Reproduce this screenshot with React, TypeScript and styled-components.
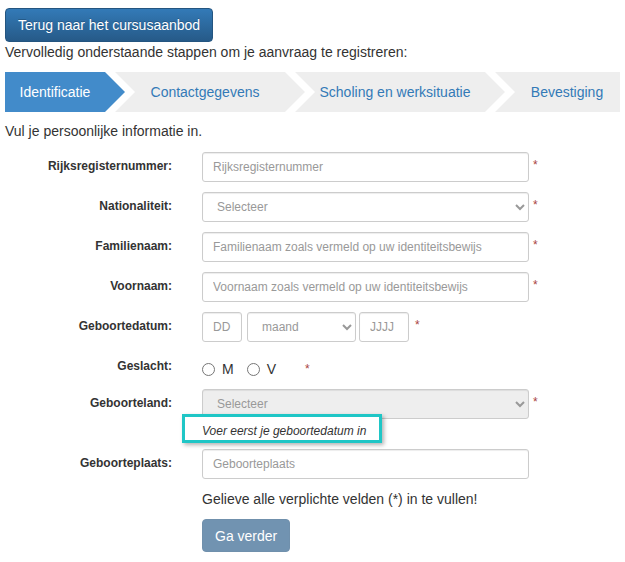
import styled, { createGlobalStyle, css } from "styled-components";

const GlobalStyle = createGlobalStyle`
  body {
    margin: 0;
    background: #fff;
    font-family: "Liberation Sans", Arial, Helvetica, sans-serif;
    font-size: 14px;
    line-height: 20px;
    color: #333;
  }
  * { box-sizing: border-box; }
`;

const Page = styled.div`
  padding: 8px 5px;
`;

const BackButton = styled.button`
  display: block;
  height: 34px;
  padding: 6px 12px;
  font: inherit;
  color: #fff;
  background-image: linear-gradient(to bottom, #337ab7 0, #265a88 100%);
  border: 1px solid #245580;
  border-radius: 4px;
  text-shadow: 0 -1px 0 rgba(0, 0, 0, 0.2);
  cursor: pointer;
`;

const Intro = styled.p`
  margin: 0;
`;

const StepBar = styled.ol`
  display: flex;
  margin: 10px 0 0;
  padding: 0;
  list-style: none;
  overflow: hidden;
`;

const Step = styled.li<{ $width: number; $active?: boolean; $first?: boolean }>`
  flex: 0 0 ${(p) => p.$width}px;
  height: 40px;
  line-height: 40px;
  text-align: center;
  white-space: nowrap;
  padding: 0 20px 0 ${(p) => (p.$first ? 0 : 10)}px;
  margin-left: ${(p) => (p.$first ? 0 : -10)}px;
  background: ${(p) => (p.$active ? "#428bca" : "#eee")};
  color: ${(p) => (p.$active ? "#fff" : "#337ab7")};
  clip-path: ${(p) =>
    p.$first
      ? "polygon(0 0, calc(100% - 20px) 0, 100% 50%, calc(100% - 20px) 100%, 0 100%)"
      : "polygon(0 0, calc(100% - 20px) 0, 100% 50%, calc(100% - 20px) 100%, 0 100%, 20px 50%)"};
`;

const Lead = styled.p`
  margin: 9px 0 11px;
`;

const Form = styled.form`
  display: flex;
  flex-direction: column;
  gap: 10px;
`;

const Row = styled.div<{ $height?: number }>`
  display: flex;
  align-items: flex-start;
  min-height: ${(p) => p.$height ?? 30}px;
`;

const Label = styled.label<{ $offset?: number }>`
  flex: 0 0 167px;
  margin-right: 30px;
  text-align: right;
  font-weight: bold;
  font-size: 12px;
  line-height: 17px;
  padding-top: ${(p) => p.$offset ?? 6}px;
`;

const Field = styled.div`
  display: flex;
  align-items: flex-start;
`;

const Column = styled.div`
  display: flex;
  flex-direction: column;
  align-items: flex-start;
`;

const controlBase = css`
  height: 30px;
  padding: 5px 10px;
  font-family: inherit;
  font-size: 12px;
  line-height: 1.5;
  color: #555;
  background-color: #fff;
  border: 1px solid #ccc;
  border-radius: 3px;
  box-shadow: inset 0 1px 1px rgba(0, 0, 0, 0.075);
  &::placeholder { color: #999; }
`;

const TextInput = styled.input<{ $width: number }>`
  ${controlBase};
  width: ${(p) => p.$width}px;
`;

const Select = styled.select<{ $width: number }>`
  ${controlBase};
  width: ${(p) => p.$width}px;
  color: #999;
  &:disabled {
    background-color: #eee;
    opacity: 1;
    cursor: not-allowed;
  }
`;

const Required = styled.span<{ $gap?: number }>`
  margin-left: ${(p) => p.$gap ?? 4}px;
  color: #a94442;
  font-size: 12px;
  line-height: 27px;
`;

const DateGroup = styled.div`
  display: flex;
  gap: 5px;
  & > :last-child { margin-left: -2px; }
`;

const RadioGroup = styled.div`
  display: flex;
  align-items: center;
  height: 27px;
  padding-top: 7px;
`;

const RadioLabel = styled.label`
  display: flex;
  align-items: center;
  gap: 7px;
  margin-right: 13px;
  font-size: 14px;
  line-height: 20px;
`;

const Radio = styled.input`
  width: 13px;
  height: 13px;
  margin: 0;
`;

const HelpWrap = styled.div`
  position: relative;
  margin-top: 4px;
`;

const Highlight = styled.span`
  position: absolute;
  left: -20px;
  top: -9px;
  width: 200px;
  height: 29px;
  background: #fff;
  border: 3px solid #1fc6c6;
  box-shadow: 2px 2px 4px rgba(0, 0, 0, 0.3);
  z-index: 1;
`;

const HelpText = styled.span`
  position: relative;
  z-index: 2;
  display: block;
  font-size: 12px;
  line-height: 16px;
  font-style: italic;
  color: #333;
`;

const Note = styled.p`
  margin: 0 0 0 197px;
`;

const NextButton = styled.button`
  align-self: flex-start;
  margin-left: 197px;
  height: 33px;
  padding: 6px 12px;
  font: inherit;
  color: #fff;
  background-color: #265a88;
  border: 1px solid #245580;
  border-radius: 4px;
  opacity: 0.65;
  cursor: not-allowed;
`;

const steps = [
  { label: "Identificatie", width: 120 },
  { label: "Contactgegevens", width: 190 },
  { label: "Scholing en werksituatie", width: 210 },
  { label: "Bevestiging", width: 154 },
];

export default function App() {
  return (
    <Page>
      <GlobalStyle />
      <BackButton>Terug naar het cursusaanbod</BackButton>
      <Intro>Vervolledig onderstaande stappen om je aanvraag te registreren:</Intro>
      <StepBar>
        {steps.map((s, i) => (
          <Step key={s.label} $width={s.width} $first={i === 0} $active={i === 0}>
            {s.label}
          </Step>
        ))}
      </StepBar>
      <Lead>Vul je persoonlijke informatie in.</Lead>
      <Form onSubmit={(e) => e.preventDefault()}>
        <Row>
          <Label>Rijksregisternummer:</Label>
          <Field>
            <TextInput $width={327} placeholder="Rijksregisternummer" />
            <Required>*</Required>
          </Field>
        </Row>
        <Row>
          <Label>Nationaliteit:</Label>
          <Field>
            <Select $width={327} defaultValue="">
              <option value="">Selecteer</option>
            </Select>
            <Required>*</Required>
          </Field>
        </Row>
        <Row>
          <Label>Familienaam:</Label>
          <Field>
            <TextInput $width={327} placeholder="Familienaam zoals vermeld op uw identiteitsbewijs" />
            <Required>*</Required>
          </Field>
        </Row>
        <Row>
          <Label>Voornaam:</Label>
          <Field>
            <TextInput $width={327} placeholder="Voornaam zoals vermeld op uw identiteitsbewijs" />
            <Required>*</Required>
          </Field>
        </Row>
        <Row>
          <Label>Geboortedatum:</Label>
          <Field>
            <DateGroup>
              <TextInput $width={40} placeholder="DD" />
              <Select $width={109} defaultValue="">
                <option value="">maand</option>
              </Select>
              <TextInput $width={50} placeholder="JJJJ" />
            </DateGroup>
            <Required $gap={6}>*</Required>
          </Field>
        </Row>
        <Row $height={27}>
          <Label $offset={6}>Geslacht:</Label>
          <Field>
            <RadioGroup>
              <RadioLabel>
                <Radio type="radio" name="geslacht" /> M
              </RadioLabel>
              <RadioLabel>
                <Radio type="radio" name="geslacht" /> V
              </RadioLabel>
              <Required $gap={16}>*</Required>
            </RadioGroup>
          </Field>
        </Row>
        <Row>
          <Label>Geboorteland:</Label>
          <Column>
            <Field>
              <Select $width={327} defaultValue="" disabled>
                <option value="">Selecteer</option>
              </Select>
              <Required>*</Required>
            </Field>
            <HelpWrap>
              <Highlight />
              <HelpText>Voer eerst je geboortedatum in</HelpText>
            </HelpWrap>
          </Column>
        </Row>
        <Row>
          <Label>Geboorteplaats:</Label>
          <Field>
            <TextInput $width={327} placeholder="Geboorteplaats" />
          </Field>
        </Row>
        <Note>Gelieve alle verplichte velden (*) in te vullen!</Note>
        <NextButton type="submit" disabled>
          Ga verder
        </NextButton>
      </Form>
    </Page>
  );
}
